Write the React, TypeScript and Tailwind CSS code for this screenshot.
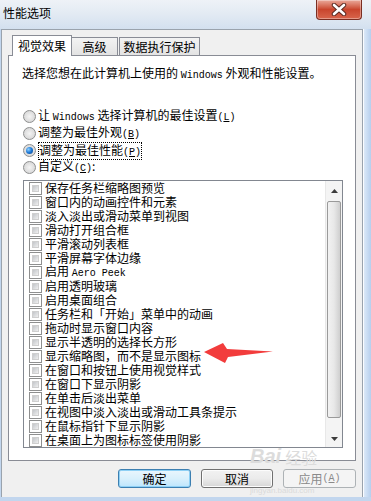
import { ReactNode } from "react";

function Lt({ children }: { children: ReactNode }) {
  return <span className="font-['Liberation_Mono',monospace] text-[10px]">{children}</span>;
}

function Key({ k }: { k: string }) {
  return (
    <Lt>
      (<span className="underline">{k}</span>)
    </Lt>
  );
}

function Radio({ checked }: { checked?: boolean }) {
  return (
    <span className="flex items-center justify-center w-[13px] h-[13px] rounded-full border border-[#8e8f8f] bg-radial from-[#f4f4f4] to-[#cfcfcf] shrink-0">
      {checked && (
        <span className="w-[7px] h-[7px] rounded-full bg-radial-[at_35%_35%] from-[#8fd0ff] via-[#1c78d6] to-[#0a3e86]" />
      )}
    </span>
  );
}

function Check() {
  return (
    <span className="flex w-[13px] h-[13px] border border-[#8e8f8f] bg-white p-[2px] shrink-0">
      <span className="flex-1 bg-linear-to-br from-[#c2c5c9] to-[#f0f0f0] border border-[#cfcfcf]" />
    </span>
  );
}

const items: ReactNode[] = [
  "保存任务栏缩略图预览",
  "窗口内的动画控件和元素",
  "淡入淡出或滑动菜单到视图",
  "滑动打开组合框",
  "平滑滚动列表框",
  "平滑屏幕字体边缘",
  <>启用 <Lt>Aero Peek</Lt></>,
  "启用透明玻璃",
  "启用桌面组合",
  "任务栏和「开始」菜单中的动画",
  "拖动时显示窗口内容",
  "显示半透明的选择长方形",
  "显示缩略图，而不是显示图标",
  "在窗口和按钮上使用视觉样式",
  "在窗口下显示阴影",
  "在单击后淡出菜单",
  "在视图中淡入淡出或滑动工具条提示",
  "在鼠标指针下显示阴影",
  "在桌面上为图标标签使用阴影",
];

export default function App() {
  return (
    <div className="relative w-[371px] h-[501px] overflow-hidden flex flex-col bg-[#c2d6ee] text-[12px] leading-[14px] text-black font-['Noto_Sans_CJK_SC',sans-serif]">
      {/* title bar */}
      <div className="h-[29px] flex justify-between bg-linear-to-b from-[#eef2f7] via-[#e2eaf3] to-[#d3e0ef]">
        <div className="pl-[3px] pt-[5px] leading-[16px] text-[12px]">性能选项</div>
        <div className="mr-[9px] w-[46px] h-[20px] rounded-b-[4px] border border-t-0 border-[#7a2e22] bg-linear-to-b from-[#e9a99b] via-[#c9452d] to-[#d8654c] flex items-center justify-center shadow-[inset_0_0_0_1px_rgba(255,255,255,0.35)]">
          <svg width="16" height="13" viewBox="0 0 16 13">
            <path d="M3 2 L13 11 M13 2 L3 11" stroke="#5a2a22" strokeWidth="4.5" strokeLinecap="round" />
            <path d="M3 2 L13 11 M13 2 L3 11" stroke="#ffffff" strokeWidth="2.6" strokeLinecap="round" />
          </svg>
        </div>
      </div>

      <div className="flex flex-1">
        <div className="ml-[1px] w-[362px] border border-b-0 border-[#9aa3ad] bg-[#f0f0f0] pt-[5px] pl-[6px]">
          {/* tabs */}
          <div className="relative z-10 flex items-end h-[21px] -mb-[1px] pl-[4px]">
            <div className="h-[21px] w-[60px] border border-b-0 border-[#898c95] bg-white flex items-center justify-center pb-[1px]">
              视觉效果
            </div>
            <div className="mb-[1px] h-[18px] w-[46px] border border-l-0 border-b-0 border-[#898c95] bg-linear-to-b from-[#f3f3f3] to-[#e3e3e3] flex items-center justify-center">
              高级
            </div>
            <div className="mb-[1px] ml-[1px] h-[18px] w-[81px] border border-b-0 border-[#898c95] bg-linear-to-b from-[#f3f3f3] to-[#e3e3e3] flex items-center justify-center">
              数据执行保护
            </div>
          </div>

          {/* panel */}
          <div className="w-[348px] h-[406px] border border-[#898c95] bg-white pt-[10px] pl-[13px]">
            <div>
              选择您想在此计算机上使用的 <Lt>Windows</Lt> 外观和性能设置。
            </div>

            <div className="mt-[25px] ml-[1px] flex flex-col">
              <div className="h-[17px] flex items-center gap-[2px]">
                <Radio />
                <span>
                  让 <Lt>Windows</Lt> 选择计算机的最佳设置<Key k="L" />
                </span>
              </div>
              <div className="h-[17px] flex items-center gap-[2px]">
                <Radio />
                <span>
                  调整为最佳外观<Key k="B" />
                </span>
              </div>
              <div className="h-[17px] flex items-center gap-[2px]">
                <Radio checked />
                <span className="border border-dotted border-black leading-[13px]">
                  调整为最佳性能<Key k="P" />
                </span>
              </div>
              <div className="h-[17px] flex items-center gap-[2px]">
                <Radio />
                <span>
                  自定义<Key k="C" />:
                </span>
              </div>
            </div>

            {/* list box */}
            <div className="mt-[4px] ml-[1px] w-[320px] h-[268px] border border-[#828790] bg-white flex">
              <div className="flex-1 flex flex-col">
                {items.map((it, i) => (
                  <div key={i} className="h-[14px] flex items-center gap-[3px] pl-[5px] whitespace-nowrap">
                    <Check />
                    <span>{it}</span>
                  </div>
                ))}
              </div>
              <div className="w-[17px] bg-[#f4f4f4] border-l border-[#e8e8e8] flex flex-col">
                <div className="h-[20px] flex items-center justify-center">
                  <svg width="7" height="4" viewBox="0 0 7 4">
                    <path d="M0 4 L3.5 0 L7 4 Z" fill="#3c3c3c" />
                  </svg>
                </div>
                <div className="mx-[1px] h-[217px] rounded-[2px] border border-[#9a9a9a] bg-linear-to-r from-[#f2f2f2] via-[#e8e8e8] to-[#cfcfcf]" />
                <div className="flex-1 flex items-end justify-center pb-[6px]">
                  <svg width="7" height="4" viewBox="0 0 7 4">
                    <path d="M0 0 L7 0 L3.5 4 Z" fill="#3c3c3c" />
                  </svg>
                </div>
              </div>
            </div>
          </div>

          {/* buttons */}
          <div className="mt-[8px] w-[348px] flex justify-end gap-[10px]">
            <div className="w-[73px] h-[19px] rounded-[3px] border border-[#3c7fb1] bg-linear-to-b from-[#eaf6fd] via-[#d9f0fc] to-[#bee6fd] shadow-[inset_0_0_0_1px_#8ed0f5] flex items-center justify-center">
              确定
            </div>
            <div className="w-[72px] h-[19px] rounded-[3px] border border-[#707070] bg-linear-to-b from-[#f2f2f2] via-[#ebebeb] to-[#d6d6d6] shadow-[inset_0_0_0_1px_#fcfcfc] flex items-center justify-center">
              取消
            </div>
            <div className="w-[73px] h-[19px] rounded-[3px] border border-[#adb2b5] bg-[#f4f4f4] text-[#8a8a8a] flex items-center justify-center">
              应用<Key k="A" />
            </div>
          </div>
        </div>
        <div className="flex-1 border-l border-[#fafcff] bg-linear-to-r from-[#dbe8f7] to-[#b6cfee]" />
      </div>
      <div className="h-[4px] bg-[#c2d6ee]" />

      {/* red arrow annotation */}
      <svg className="absolute left-[200px] top-[340px]" width="76" height="26" viewBox="0 0 76 26">
        <path d="M4 12 L23 3 L27 9 L73 11.5 L28 17 L25 23 Z" fill="#f23c3c" />
      </svg>

      {/* watermark */}
      <div className="absolute left-[250px] top-[446px] flex items-end gap-[4px] text-[#dcdcdc] pointer-events-none">
        <span className="font-['Liberation_Sans',sans-serif] font-bold text-[20px] leading-[20px] italic">Bai</span>
        <span className="text-[16px] leading-[18px]">经验</span>
      </div>
      <div className="absolute left-[250px] top-[486px] text-[8px] leading-[10px] text-[#dadada] font-['Liberation_Sans',sans-serif] pointer-events-none">
        jingyan.baidu.com
      </div>
    </div>
  );
}
